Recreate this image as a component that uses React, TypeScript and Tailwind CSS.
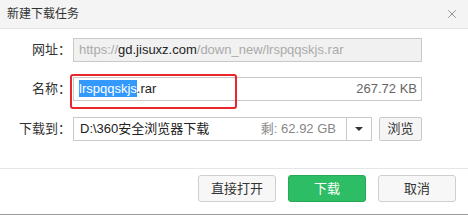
import { X } from 'lucide-react';

const font = { fontFamily: '"Liberation Sans", "Noto Sans CJK SC", sans-serif' };

function Label({ text }: { text: string }) {
    return <div className="w-[71px] shrink-0 text-right text-[13px] text-[#333] mr-[2px]">{text}</div>;
}

export default function App() {
    return (
        <div className="w-[468px] h-[215px] bg-white flex flex-col border-b border-[#9a9a9a] relative" style={font}>
            {/* Title bar */}
            <div className="h-[29px] shrink-0 bg-[#f4f4f4] border-b border-[#e2e2e2] flex items-center justify-between pl-[7px] pr-[9px]">
                <span className="text-[12px] text-[#333]">新建下载任务</span>
                <X className="w-[14px] h-[14px] text-[#777]" strokeWidth={1.3} />
            </div>

            {/* Form */}
            <div className="flex-1 pt-[9px] flex flex-col gap-[15px]">
                <div className="flex items-center h-[24px]">
                    <Label text="网址：" />
                    <div className="w-[349px] h-[24px] border border-[#c9c9c9] bg-[#f1f1f1] flex items-center pl-[5px] text-[13px] text-[#aaa] whitespace-nowrap overflow-hidden">
                        https://<span className="text-[#222]">gd.jisuxz.com</span>/down_new/lrspqqskjs.rar
                    </div>
                </div>

                <div className="flex items-center h-[24px]">
                    <Label text="名称：" />
                    <div className="w-[349px] h-[24px] border border-[#c9c9c9] bg-white flex items-center justify-between pl-[5px] pr-[4px] text-[13px]">
                        <span className="text-[#222]">
                            <span className="bg-[#3399ff] text-white py-[1px]">lrspqqskjs</span>.rar
                        </span>
                        <span className="text-[#666]">267.72 KB</span>
                    </div>
                </div>

                <div className="flex items-center h-[24px] mt-px">
                    <Label text="下载到：" />
                    <div className="w-[299px] h-[24px] border border-[#c9c9c9] bg-white flex items-center text-[13px]">
                        <div className="flex-1 flex items-center justify-between pl-[6px] pr-[10px]">
                            <span className="text-[#222]">D:\360安全浏览器下载</span>
                            <span className="text-[#888]">剩: 62.92 GB</span>
                        </div>
                        <div className="w-[25px] h-full border-l border-[#c9c9c9] flex items-center justify-center">
                            <div className="w-0 h-0 border-l-[4px] border-r-[4px] border-t-[4px] border-l-transparent border-r-transparent border-t-[#333]" />
                        </div>
                    </div>
                    <button className="ml-[7px] w-[43px] h-[24px] border border-[#c9c9c9] rounded-[2px] bg-[#f5f5f5] text-[13px] text-[#333]">
                        浏览
                    </button>
                </div>
            </div>

            {/* Footer */}
            <div className="h-[46px] shrink-0 border-t border-[#e6e6e6] flex justify-end gap-[12px] pt-[6px] pr-[12px]">
                <button className="w-[78px] h-[27px] border border-[#cfcfcf] rounded-[3px] bg-[#f7f7f7] text-[13px] text-[#333]">
                    直接打开
                </button>
                <button className="w-[78px] h-[27px] border border-[#27a957] rounded-[3px] bg-[#2dbd64] text-[13px] text-white">
                    下载
                </button>
                <button className="w-[78px] h-[27px] border border-[#cfcfcf] rounded-[3px] bg-[#f7f7f7] text-[13px] text-[#333]">
                    取消
                </button>
            </div>

            {/* Red annotation box */}
            <div className="absolute left-[70px] top-[74px] w-[167px] h-[35px] border-2 border-[#e8262b] rounded-[3px] pointer-events-none" />
        </div>
    );
}
